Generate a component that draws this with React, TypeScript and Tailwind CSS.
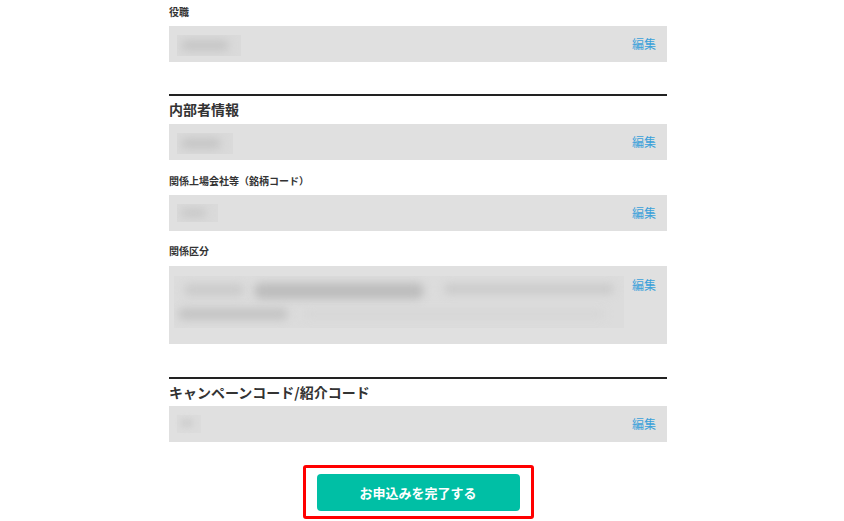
import React from "react";

const font = { fontFamily: '"Noto Sans CJK JP", "Noto Sans", sans-serif' };

type FieldProps = {
  height: string;
  children: React.ReactNode;
};

// grey read-only row with the edit link at top right
const Field: React.FC<FieldProps> = ({ height, children }) => (
  <div className={`flex items-start justify-between bg-[#e0e0e0] pt-[9px] pl-2 pr-[11px] ${height}`}>
    <div className="flex-1">{children}</div>
    <a className="mt-[1px] text-[12px] leading-[16px] text-[#3aa0da] cursor-pointer">編集</a>
  </div>
);

const Label: React.FC<{ className?: string; children: React.ReactNode }> = ({ className = "", children }) => (
  <div className={`text-[10px] leading-[14px] font-bold text-[#333] ${className}`}>{children}</div>
);

const Heading: React.FC<{ className?: string; children: React.ReactNode }> = ({ className = "", children }) => (
  <h2 className={`text-[14px] leading-[20px] font-bold text-[#333] ${className}`}>{children}</h2>
);

// masked value: blurry grey smudge
const Blur: React.FC<{ w: string; h?: string }> = ({ w, h = "h-[21px]" }) => (
  <div className={`relative overflow-hidden bg-[#dadada] ${w} ${h}`}>
    <div className="absolute left-1 right-3 top-[5px] bottom-[5px] rounded-full bg-[#c6c6c6] blur-[4px]" />
  </div>
);

export default function App() {
  return (
    <div className="min-h-[521px] bg-white flex justify-center pr-2" style={font}>
      <div className="w-[498px] pt-[5px]">
        <Label className="mb-[7px]">役職</Label>
        <Field height="h-[36px]">
          <Blur w="w-[64px]" />
        </Field>

        <div className="mt-8 border-t-2 border-[#222]" />
        <Heading className="mt-[3px] mb-[5px]">内部者情報</Heading>
        <Field height="h-[36px]">
          <Blur w="w-[56px]" />
        </Field>

        <Label className="mt-[14px] mb-[7px]">関係上場会社等（銘柄コード）</Label>
        <Field height="h-[36px]">
          <Blur w="w-[41px]" h="h-[18px]" />
        </Field>

        <Label className="mt-[13px] mb-[8px]">関係区分</Label>
        <div className="flex items-start justify-between bg-[#e0e0e0] h-[78px] pt-[10px] pl-[5px] pr-[11px]">
          <div className="relative w-[450px] h-[52px] overflow-hidden bg-[#dcdcdc]">
            <div className="absolute left-[10px] top-[8px] w-[60px] h-[12px] rounded-full bg-[#cbcbcb] blur-[4px]" />
            <div className="absolute left-[80px] top-[7px] w-[170px] h-[16px] rounded-full bg-[#bdbdbd] blur-[4px]" />
            <div className="absolute left-[270px] top-[8px] w-[170px] h-[10px] rounded-full bg-[#cacaca] blur-[4px]" />
            <div className="absolute left-[4px] top-[32px] w-[110px] h-[12px] rounded-full bg-[#c4c4c4] blur-[4px]" />
            <div className="absolute left-[130px] top-[34px] w-[300px] h-[8px] rounded-full bg-[#d6d6d6] blur-[4px]" />
          </div>
          <a className="mt-[1px] text-[12px] leading-[16px] text-[#3aa0da] cursor-pointer">編集</a>
        </div>

        <div className="mt-[33px] border-t-2 border-[#222]" />
        <Heading className="mt-[3px] mb-[4px]">キャンペーンコード/紹介コード</Heading>
        <Field height="h-[36px]">
          <div className="relative w-[24px] h-[18px] bg-[#dcdcdc]">
            <div className="absolute left-1 top-1 w-3 h-2 rounded-full bg-[#cdcdcd] blur-[3px]" />
          </div>
        </Field>

        <div className="mt-[23px] mx-auto w-[231px] border-[3px] border-[#ff0000] rounded-[3px] pt-[6px] pb-[5px] px-[11px]">
          <button className="w-full h-[37px] rounded-[4px] bg-[#00bfa5] text-white text-[13px] font-bold">
            お申込みを完了する
          </button>
        </div>
      </div>
    </div>
  );
}
